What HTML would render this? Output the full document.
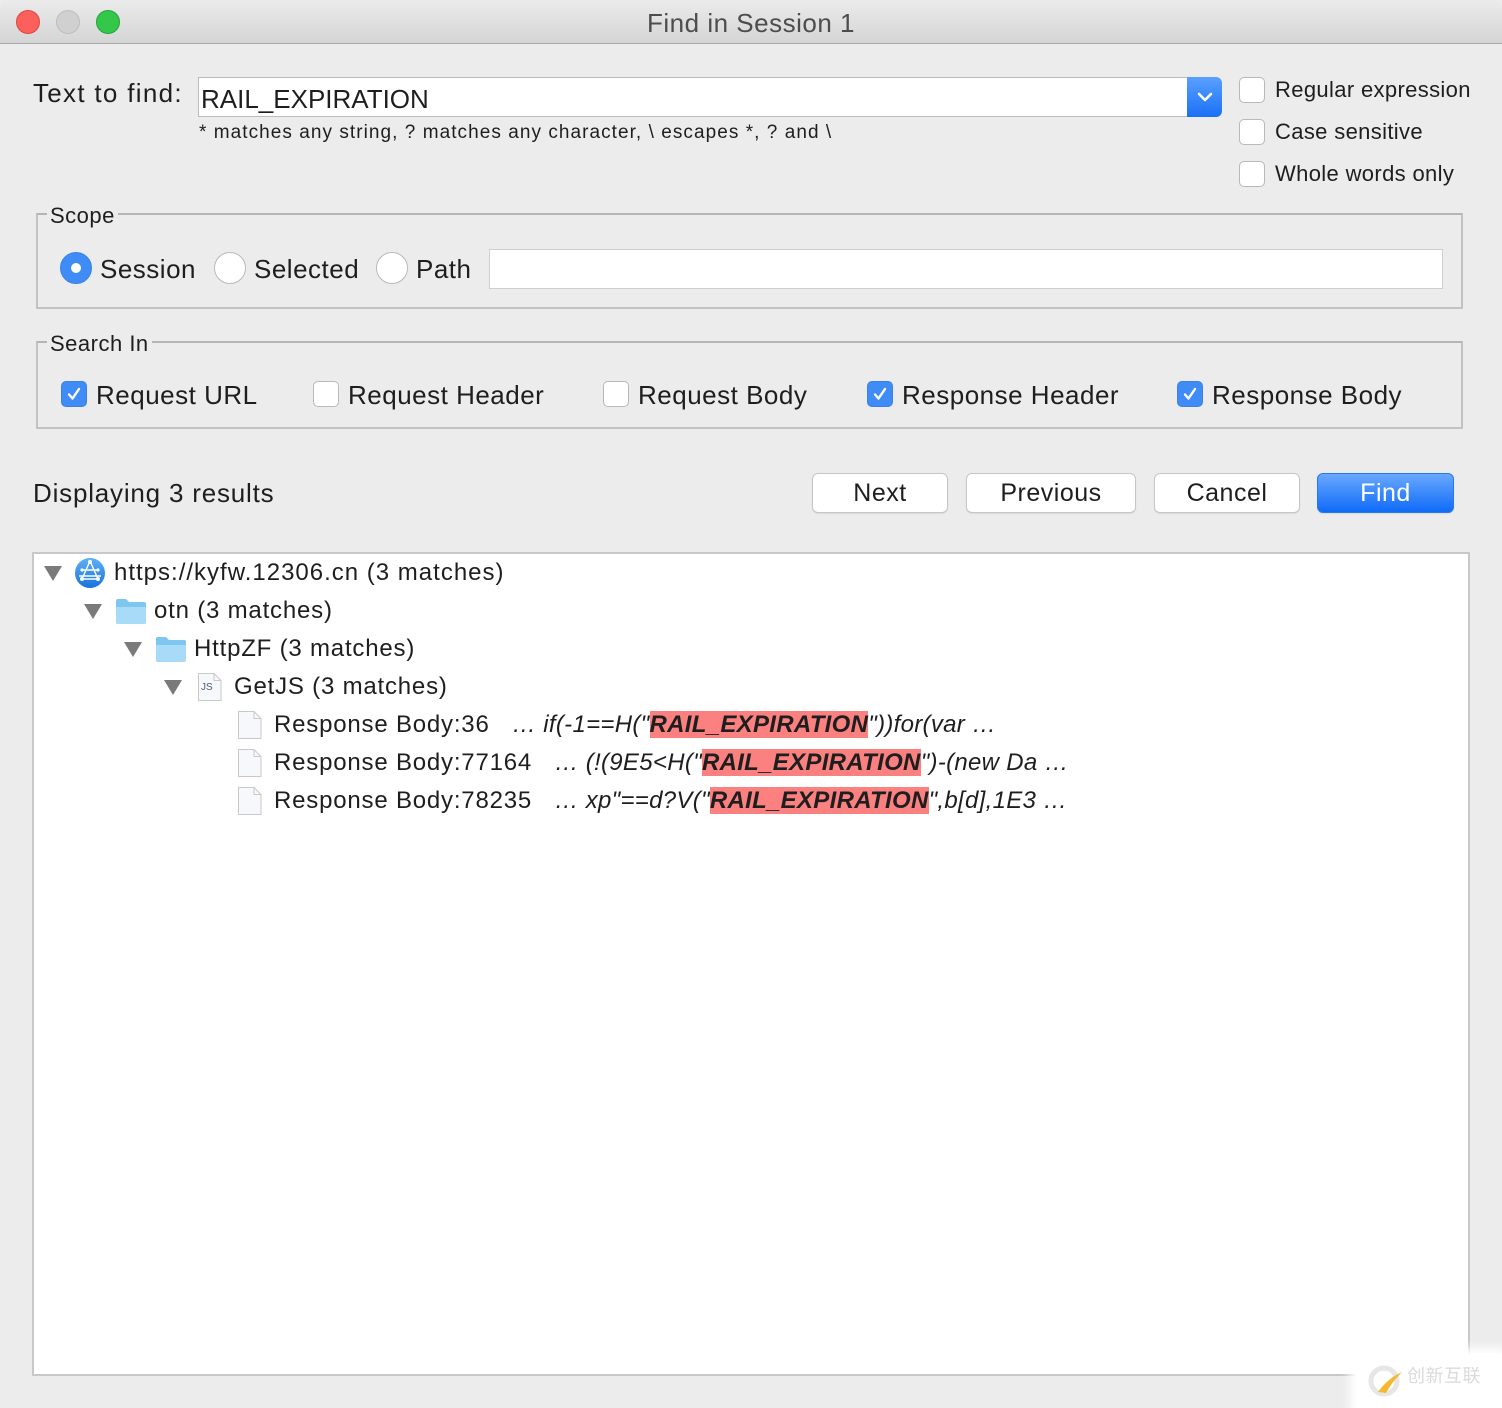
<!DOCTYPE html>
<html><head><meta charset="utf-8"><style>
*{box-sizing:border-box;margin:0;padding:0}
body{width:1502px;height:1408px;background:#ececec;position:relative;overflow:hidden;font-family:"Liberation Sans","DejaVu Sans",sans-serif;color:#1e1e1e}
.a{position:absolute;white-space:nowrap}
.t{position:absolute;white-space:nowrap;line-height:30px;letter-spacing:0.5px}
.cb{position:absolute;width:26px;height:26px;border:1px solid #b9b9b9;border-radius:5px;background:#fff}
.cb.on{background:#3f8cf6;border-color:#3a82e8}
.cb.on svg{position:absolute;left:3px;top:3px}
.rd{position:absolute;width:32px;height:32px;border-radius:50%;border:1px solid #b9b9b9;background:#fff}
.btn{position:absolute;top:473px;height:40px;background:#fff;border:1px solid #c6c6c6;border-radius:6px;font-size:25px;text-align:center;line-height:38px;box-shadow:0 1px 1px rgba(0,0,0,.08);letter-spacing:0.5px}
.fs{position:absolute;left:36px;width:1427px;border:2px solid #c2c2c2;border-top-color:#b5b5b5}
.leg{position:absolute;background:#ececec;font-size:22px;padding:0 3px;line-height:24px;letter-spacing:0.5px}
.tri{position:absolute;width:0;height:0;border-left:9px solid transparent;border-right:9px solid transparent;border-top:15px solid #7a7a7a}
.row{font-size:24px;letter-spacing:0.8px}
.row i{letter-spacing:0.3px}
.hl{background:#fb8181;font-weight:bold}
</style></head><body>
<div class="a" style="left:0;top:0;width:1502px;height:44px;background:linear-gradient(#ebebeb,#d5d5d5);border-bottom:1px solid #a9a9a9;border-radius:10px 10px 0 0"></div>
<div class="a" style="left:16px;top:10px;width:24px;height:24px;border-radius:50%;background:#fc605c;border:1px solid #e0443e"></div>
<div class="a" style="left:56px;top:10px;width:24px;height:24px;border-radius:50%;background:#d0d0d0;border:1px solid #bdbdbd"></div>
<div class="a" style="left:96px;top:10px;width:24px;height:24px;border-radius:50%;background:#34c84a;border:1px solid #24a33a"></div>
<div class="t" style="left:0;width:1502px;text-align:center;top:8px;font-size:26px;color:#4d4d4d">Find in Session 1</div>

<div class="t" style="left:33px;top:78px;font-size:26px;letter-spacing:1.3px">Text to find:</div>
<div class="a" style="left:198px;top:77px;width:992px;height:40px;background:#fff;border:1px solid #bcbcbc"></div>
<div class="a" style="left:1187px;top:77px;width:35px;height:40px;background:linear-gradient(#5aa0ff,#1a70f5);border-radius:0 6px 6px 0"></div>
<svg class="a" style="left:1196px;top:90px" width="18" height="14"><path d="M3 4 L9 10 L15 4" stroke="#fff" stroke-width="2.6" fill="none" stroke-linecap="round" stroke-linejoin="round"/></svg>
<div class="t" style="left:201px;top:84px;font-size:26px;letter-spacing:0">RAIL_EXPIRATION</div>
<div class="t" style="left:199px;top:118px;font-size:19px;letter-spacing:1.05px">* matches any string, ? matches any character, \ escapes *, ? and \</div>

<div class="cb" style="left:1239px;top:77px"></div>
<div class="t" style="left:1275px;top:75px;font-size:22px;letter-spacing:0.35px">Regular expression</div>
<div class="cb" style="left:1239px;top:119px"></div>
<div class="t" style="left:1275px;top:117px;font-size:22px;letter-spacing:0.35px">Case sensitive</div>
<div class="cb" style="left:1239px;top:161px"></div>
<div class="t" style="left:1275px;top:159px;font-size:22px;letter-spacing:0.35px">Whole words only</div>

<div class="fs" style="top:213px;height:96px"></div>
<div class="leg" style="left:47px;top:204px">Scope</div>
<div class="rd" style="left:60px;top:252px;background:#3f8cf6;border-color:#3a82e8"><div class="a" style="left:10px;top:10px;width:10px;height:10px;border-radius:50%;background:#fff"></div></div>
<div class="t" style="left:100px;top:254px;font-size:26px">Session</div>
<div class="rd" style="left:214px;top:252px"></div>
<div class="t" style="left:254px;top:254px;font-size:26px">Selected</div>
<div class="rd" style="left:376px;top:252px"></div>
<div class="t" style="left:416px;top:254px;font-size:26px">Path</div>
<div class="a" style="left:489px;top:249px;width:954px;height:40px;background:#fff;border:1px solid #cfcfcf"></div>

<div class="fs" style="top:341px;height:88px"></div>
<div class="leg" style="left:47px;top:332px">Search In</div>
<div class="cb on" style="left:61px;top:381px"><svg width="18" height="18"><path d="M4 9.5 L7.5 13.5 L14 4" stroke="#fff" stroke-width="2.4" fill="none" stroke-linecap="round" stroke-linejoin="round"/></svg></div>
<div class="t" style="left:96px;top:380px;font-size:26px">Request URL</div>
<div class="cb" style="left:313px;top:381px"></div>
<div class="t" style="left:348px;top:380px;font-size:26px">Request Header</div>
<div class="cb" style="left:603px;top:381px"></div>
<div class="t" style="left:638px;top:380px;font-size:26px">Request Body</div>
<div class="cb on" style="left:867px;top:381px"><svg width="18" height="18"><path d="M4 9.5 L7.5 13.5 L14 4" stroke="#fff" stroke-width="2.4" fill="none" stroke-linecap="round" stroke-linejoin="round"/></svg></div>
<div class="t" style="left:902px;top:380px;font-size:26px">Response Header</div>
<div class="cb on" style="left:1177px;top:381px"><svg width="18" height="18"><path d="M4 9.5 L7.5 13.5 L14 4" stroke="#fff" stroke-width="2.4" fill="none" stroke-linecap="round" stroke-linejoin="round"/></svg></div>
<div class="t" style="left:1212px;top:380px;font-size:26px">Response Body</div>

<div class="t" style="left:33px;top:478px;font-size:26px;letter-spacing:0.8px">Displaying 3 results</div>
<div class="btn" style="left:812px;width:136px">Next</div>
<div class="btn" style="left:966px;width:170px">Previous</div>
<div class="btn" style="left:1154px;width:146px">Cancel</div>
<div class="btn" style="left:1317px;width:137px;background:linear-gradient(#69a8ff,#0f6bf7);border-color:#2a78ee;color:#fff">Find</div>

<div class="a" style="left:32px;top:552px;width:1438px;height:824px;background:#fff;border:2px solid #c8c8c8"></div>

<div class="tri" style="left:44px;top:566px"></div>
<svg class="a" style="left:74px;top:557px" width="32" height="32"><defs><linearGradient id="g" x1="0" y1="0" x2="0" y2="1"><stop offset="0" stop-color="#5fb0f7"/><stop offset="1" stop-color="#1673db"/></linearGradient></defs><circle cx="16" cy="16" r="15" fill="url(#g)"/><path d="M16 4 L8 22 L24 22 Z M7 13 L25 13 M5 19 L27 19" stroke="#fff" stroke-width="1.4" fill="none"/><circle cx="16" cy="5" r="2" fill="#fff"/><circle cx="8" cy="22" r="2" fill="#fff"/><circle cx="24" cy="22" r="2" fill="#fff"/><circle cx="8" cy="13" r="1.6" fill="#fff"/><circle cx="24" cy="13" r="1.6" fill="#fff"/></svg>
<div class="t row" style="left:114px;top:558px;letter-spacing:1px">https://kyfw.12306.cn (3 matches)</div>

<div class="tri" style="left:84px;top:604px"></div>
<svg class="a" style="left:115px;top:597px" width="32" height="28"><path d="M1 4 Q1 2 3 2 L11 2 L14 5 L29 5 Q31 5 31 7 L31 25 Q31 27 29 27 L3 27 Q1 27 1 25 Z" fill="#7cc6ef"/><path d="M1 10 L31 10 L31 25 Q31 27 29 27 L3 27 Q1 27 1 25 Z" fill="#a7dbf7"/></svg>
<div class="t row" style="left:154px;top:596px">otn (3 matches)</div>

<div class="tri" style="left:124px;top:642px"></div>
<svg class="a" style="left:155px;top:635px" width="32" height="28"><path d="M1 4 Q1 2 3 2 L11 2 L14 5 L29 5 Q31 5 31 7 L31 25 Q31 27 29 27 L3 27 Q1 27 1 25 Z" fill="#7cc6ef"/><path d="M1 10 L31 10 L31 25 Q31 27 29 27 L3 27 Q1 27 1 25 Z" fill="#a7dbf7"/></svg>
<div class="t row" style="left:194px;top:634px">HttpZF (3 matches)</div>

<div class="tri" style="left:164px;top:680px"></div>
<svg class="a" style="left:197px;top:672px" width="26" height="30"><path d="M1.5 1.5 L17 1.5 L24 8.5 L24 28.5 L1.5 28.5 Z" fill="#f7f8fb" stroke="#c9c9c9"/><path d="M17 1.5 L17 8.5 L24 8.5" fill="none" stroke="#c9c9c9"/><text x="4" y="18" font-size="10" fill="#4a5a70" font-family="Liberation Sans,sans-serif">JS</text></svg>
<div class="t row" style="left:234px;top:672px">GetJS (3 matches)</div>

<svg class="a" style="left:237px;top:710px" width="26" height="30"><path d="M1.5 1.5 L17 1.5 L24 8.5 L24 28.5 L1.5 28.5 Z" fill="#f7f8fb" stroke="#c9c9c9"/><path d="M17 1.5 L17 8.5 L24 8.5" fill="none" stroke="#c9c9c9"/></svg>
<div class="t row" style="left:274px;top:710px">Response Body:36&nbsp;&nbsp;&nbsp;<i>… if(-1==H("<span class="hl">RAIL_EXPIRATION</span>"))for(var …</i></div>

<svg class="a" style="left:237px;top:748px" width="26" height="30"><path d="M1.5 1.5 L17 1.5 L24 8.5 L24 28.5 L1.5 28.5 Z" fill="#f7f8fb" stroke="#c9c9c9"/><path d="M17 1.5 L17 8.5 L24 8.5" fill="none" stroke="#c9c9c9"/></svg>
<div class="t row" style="left:274px;top:748px">Response Body:77164&nbsp;&nbsp;&nbsp;<i>… (!(9E5&lt;H("<span class="hl">RAIL_EXPIRATION</span>")-(new Da …</i></div>

<svg class="a" style="left:237px;top:786px" width="26" height="30"><path d="M1.5 1.5 L17 1.5 L24 8.5 L24 28.5 L1.5 28.5 Z" fill="#f7f8fb" stroke="#c9c9c9"/><path d="M17 1.5 L17 8.5 L24 8.5" fill="none" stroke="#c9c9c9"/></svg>
<div class="t row" style="left:274px;top:786px">Response Body:78235&nbsp;&nbsp;&nbsp;<i>… xp"==d?V("<span class="hl">RAIL_EXPIRATION</span>",b[d],1E3 …</i></div>

<div class="a" style="left:1356px;top:1354px;width:146px;height:54px;background:#fff;border-radius:16px 0 0 0;box-shadow:0 0 10px 6px #fff"></div>
<svg class="a" style="left:1368px;top:1364px" width="36" height="34"><circle cx="16" cy="17" r="13" fill="none" stroke="#e6e6e6" stroke-width="5"/><path d="M10 28 Q20 14 34 8 Q24 18 18 29 Z" fill="#f5b931"/></svg>
<div class="t" style="left:1407px;top:1364px;font-size:18px;color:#dadada;font-family:'Liberation Sans','Noto Sans CJK SC',sans-serif;line-height:24px">创新互联</div>
</body></html>
